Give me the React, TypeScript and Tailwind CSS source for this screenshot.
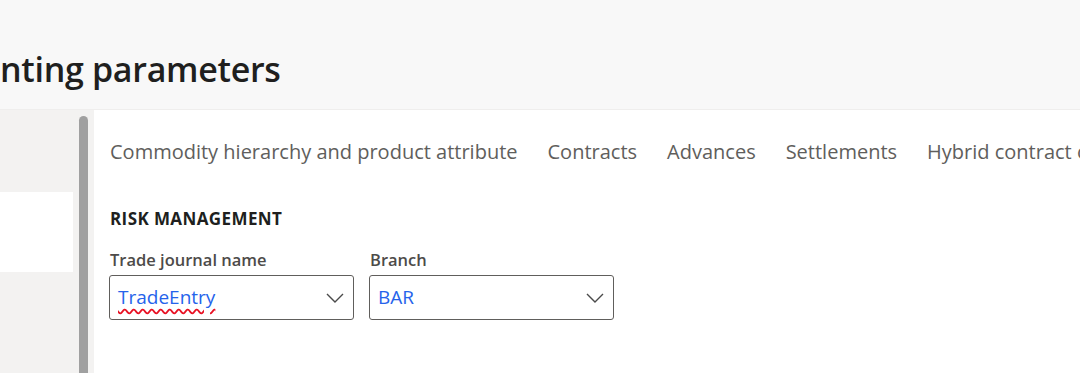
import React from "react";

const TABS = [
  "Commodity hierarchy and product attribute",
  "Contracts",
  "Advances",
  "Settlements",
  "Hybrid contract configuration",
];

function Chevron() {
  return (
    <svg width="18" height="10" viewBox="0 0 18 10" fill="none" className="shrink-0">
      <path d="M1 1l8 8 8-8" stroke="#4a4a4a" strokeWidth="1.4" />
    </svg>
  );
}

function Lookup({ label, value, spell }: { label: string; value: string; spell?: boolean }) {
  return (
    <div className="flex flex-col w-[245px]">
      <span className="text-[16.5px] font-semibold text-[#4d4b49] leading-[20px] mb-[5px] pl-px">{label}</span>
      <div className="h-[45px] border border-[#605e5c] rounded-[3px] flex items-center justify-between pl-[8px] pr-[9px]">
        <span
          className={`text-[19px] text-[#2563eb] leading-none ${
            spell ? "underline decoration-wavy decoration-[#e81123] underline-offset-[4px]" : ""
          }`}
        >
          {value}
        </span>
        <Chevron />
      </div>
    </div>
  );
}

export default function App() {
  return (
    <div
      className="w-[1080px] h-[373px] overflow-hidden bg-[#f3f2f1] flex flex-col"
      style={{ fontFamily: '"Open Sans", "Noto Sans", sans-serif' }}
    >
      <header className="h-[110px] bg-[#f8f8f8] border-b border-[#efeeed] shrink-0 flex items-end pb-[23px]">
        <h1 className="text-[34px] font-semibold text-[#201f1e] leading-none tracking-[-0.3px]">nting parameters</h1>
      </header>

      <div className="flex flex-1 min-h-0">
        {/* navigation pane */}
        <aside className="w-[79px] shrink-0 pt-[82px]">
          <div className="h-[80px] w-[73px] bg-white" />
        </aside>
        <div className="w-[9px] shrink-0 pt-[6px]">
          <div className="h-full bg-[#a0a0a0] rounded-t-full" />
        </div>
        <div className="w-[6px] shrink-0" />

        {/* main content */}
        <main className="flex-1 bg-white pl-[15px] pt-[28px] overflow-hidden">
          <nav className="flex gap-[30px] whitespace-nowrap text-[#605e5c] text-[20px] leading-[28px] pl-px">
            {TABS.map((t) => (
              <span key={t}>{t}</span>
            ))}
          </nav>

          <section className="mt-[43px]">
            <h2 className="text-[17px] font-bold text-[#201f1e] tracking-[0.4px] leading-[20px] pl-px">RISK MANAGEMENT</h2>
            <div className="flex gap-[15px] mt-[21px]">
              <Lookup label="Trade journal name" value="TradeEntry" spell />
              <Lookup label="Branch" value="BAR" />
            </div>
          </section>
        </main>
      </div>
    </div>
  );
}
